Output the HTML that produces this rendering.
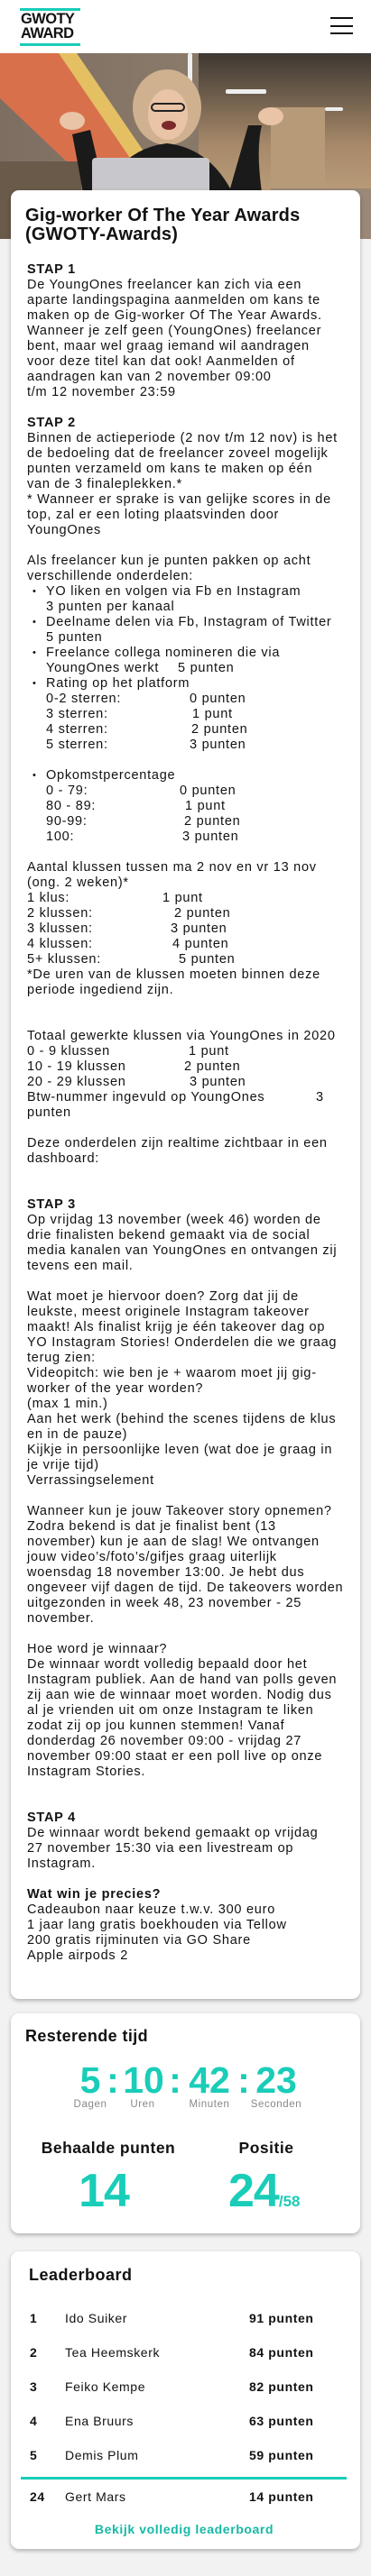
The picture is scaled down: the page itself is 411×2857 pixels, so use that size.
<!DOCTYPE html>
<html><head><meta charset="utf-8">
<style>
*{margin:0;padding:0;box-sizing:border-box}
html,body{width:411px;height:2857px;background:#f2f2f2;font-family:"Liberation Sans",Arial,sans-serif;color:#111;overflow:hidden}
.abs{position:absolute;white-space:nowrap}
.card{position:absolute;left:12px;width:387px;background:#fff;border-radius:9px;box-shadow:0 2px 5px rgba(0,0,0,.28)}
#txt{position:absolute;left:30px;top:290.5px;font-size:14.5px;letter-spacing:.75px;color:#111}
#txt div{height:17px;line-height:17px;white-space:nowrap;position:relative}
#txt b{font-weight:bold}
#txt .i{padding-left:21px}
#txt .i.bul:before{content:"•";position:absolute;left:6px;font-size:11px}
#txt span.c{position:absolute;top:0}
.teal{color:#19cdb8}
</style></head><body>
<!-- header -->
<div class="abs" style="left:0;top:0;width:411px;height:59px;background:#fff"></div>
<div class="abs" style="left:22px;top:9px;width:67px;height:3px;background:#19cdb8"></div>
<div class="abs" style="left:22px;top:48px;width:67px;height:3px;background:#19cdb8"></div>
<div class="abs" style="left:23px;top:13px;font-size:16.5px;font-weight:900;line-height:16px;letter-spacing:-.6px;color:#111">GWOTY<br>AWARD</div>
<div class="abs" style="left:366px;top:19px;width:25px;height:2px;background:#111"></div>
<div class="abs" style="left:366px;top:28px;width:25px;height:2px;background:#111"></div>
<div class="abs" style="left:366px;top:36px;width:25px;height:2px;background:#111"></div>
<!-- hero -->
<svg class="abs" style="left:0;top:59px" width="411" height="206" viewBox="0 0 411 206">
<defs><linearGradient id="bg" x1="0" x2="1" y1="0" y2="0"><stop offset="0" stop-color="#7d6e62"/><stop offset=".5" stop-color="#8a7a6a"/><stop offset="1" stop-color="#5a5048"/></linearGradient>
<linearGradient id="rt" x1="0" x2="0" y1="0" y2="1"><stop offset="0" stop-color="#3e3832"/><stop offset=".5" stop-color="#a88a6a"/><stop offset="1" stop-color="#c9ad88"/></linearGradient></defs>
<rect width="411" height="206" fill="url(#bg)"/>
<rect x="220" y="0" width="191" height="206" fill="url(#rt)"/>
<polygon points="0,0 65,0 150,120 105,150 0,50" fill="#d9704c"/>
<polygon points="65,0 85,0 160,110 150,125" fill="#e4c062"/>
<rect x="0" y="120" width="90" height="86" fill="#6a5a4a"/>
<rect x="300" y="60" width="60" height="100" fill="#b79a78"/>
<rect x="300" y="150" width="111" height="56" fill="#9a8878"/>
<rect x="250" y="40" width="45" height="5" rx="2" fill="#eee"/>
<rect x="360" y="60" width="20" height="4" rx="2" fill="#eee"/>
<rect x="208" y="0" width="5" height="40" rx="2" fill="#eee"/>
<ellipse cx="185" cy="60" rx="38" ry="42" fill="#cfb190"/>
<ellipse cx="186" cy="68" rx="22" ry="28" fill="#e9c4a6"/>
<rect x="168" y="56" width="36" height="8" rx="4" fill="none" stroke="#222" stroke-width="2"/>
<ellipse cx="187" cy="80" rx="8" ry="5" fill="#7a2a2a"/>
<path d="M80 90 Q90 140 100 206 L300 206 Q280 120 290 80 L275 80 L255 150 Q230 105 185 100 Q140 105 115 150 L100 85 Z" fill="#1a1a1a"/>
<ellipse cx="80" cy="75" rx="14" ry="10" fill="#e9c4a6"/>
<ellipse cx="300" cy="70" rx="14" ry="10" fill="#e9c4a6"/>
<rect x="102" y="116" width="130" height="90" rx="4" fill="#c8c8cc"/>
</svg>
<!-- main card -->
<div class="card" style="top:211px;height:2006px"></div>
<div class="abs" style="left:28px;top:229px;font-size:20px;font-weight:bold;line-height:21px;letter-spacing:.2px">Gig-worker Of The Year Awards<br>(GWOTY-Awards)</div>
<div id="txt">
<div><b>STAP 1</b></div>
<div>De YoungOnes freelancer kan zich via een</div>
<div>aparte landingspagina aanmelden om kans te</div>
<div>maken op de Gig-worker Of The Year Awards.</div>
<div>Wanneer je zelf geen (YoungOnes) freelancer</div>
<div>bent, maar wel graag iemand wil aandragen</div>
<div>voor deze titel kan dat ook! Aanmelden of</div>
<div>aandragen kan van 2 november 09:00</div>
<div>t/m 12 november 23:59</div>
<div></div>
<div><b>STAP 2</b></div>
<div>Binnen de actieperiode (2 nov t/m 12 nov) is het</div>
<div>de bedoeling dat de freelancer zoveel mogelijk</div>
<div>punten verzameld om kans te maken op één</div>
<div>van de 3 finaleplekken.*</div>
<div>* Wanneer er sprake is van gelijke scores in de</div>
<div>top, zal er een loting plaatsvinden door</div>
<div>YoungOnes</div>
<div></div>
<div>Als freelancer kun je punten pakken op acht</div>
<div>verschillende onderdelen:</div>
<div class="i bul">YO liken en volgen via Fb en Instagram</div>
<div class="i">3 punten per kanaal</div>
<div class="i bul">Deelname delen via Fb, Instagram of Twitter</div>
<div class="i">5 punten</div>
<div class="i bul">Freelance collega nomineren die via</div>
<div class="i">YoungOnes werkt<span class="c" style="left:167px">5 punten</span></div>
<div class="i bul">Rating op het platform</div>
<div class="i">0-2 sterren:<span class="c" style="left:180px">0 punten</span></div>
<div class="i">3 sterren:<span class="c" style="left:183px">1 punt</span></div>
<div class="i">4 sterren:<span class="c" style="left:182px">2 punten</span></div>
<div class="i">5 sterren:<span class="c" style="left:180px">3 punten</span></div>
<div></div>
<div class="i bul">Opkomstpercentage</div>
<div class="i">0 - 79:<span class="c" style="left:169px">0 punten</span></div>
<div class="i">80 - 89:<span class="c" style="left:175px">1 punt</span></div>
<div class="i">90-99:<span class="c" style="left:174px">2 punten</span></div>
<div class="i">100:<span class="c" style="left:172px">3 punten</span></div>
<div></div>
<div>Aantal klussen tussen ma 2 nov en vr 13 nov</div>
<div>(ong. 2 weken)*</div>
<div>1 klus:<span class="c" style="left:150px">1 punt</span></div>
<div>2 klussen:<span class="c" style="left:163px">2 punten</span></div>
<div>3 klussen:<span class="c" style="left:159px">3 punten</span></div>
<div>4 klussen:<span class="c" style="left:161px">4 punten</span></div>
<div>5+ klussen:<span class="c" style="left:168px">5 punten</span></div>
<div>*De uren van de klussen moeten binnen deze</div>
<div>periode ingediend zijn.</div>
<div></div>
<div></div>
<div>Totaal gewerkte klussen via YoungOnes in 2020</div>
<div>0 - 9 klussen<span class="c" style="left:179px">1 punt</span></div>
<div>10 - 19 klussen<span class="c" style="left:174px">2 punten</span></div>
<div>20 - 29 klussen<span class="c" style="left:180px">3 punten</span></div>
<div>Btw-nummer ingevuld op YoungOnes<span class="c" style="left:320px">3</span></div>
<div>punten</div>
<div></div>
<div>Deze onderdelen zijn realtime zichtbaar in een</div>
<div>dashboard:</div>
<div></div>
<div></div>
<div><b>STAP 3</b></div>
<div>Op vrijdag 13 november (week 46) worden de</div>
<div>drie finalisten bekend gemaakt via de social</div>
<div>media kanalen van YoungOnes en ontvangen zij</div>
<div>tevens een mail.</div>
<div></div>
<div>Wat moet je hiervoor doen? Zorg dat jij de</div>
<div>leukste, meest originele Instagram takeover</div>
<div>maakt! Als finalist krijg je één takeover dag op</div>
<div>YO Instagram Stories! Onderdelen die we graag</div>
<div>terug zien:</div>
<div>Videopitch: wie ben je + waarom moet jij gig-</div>
<div>worker of the year worden?</div>
<div>(max 1 min.)</div>
<div>Aan het werk (behind the scenes tijdens de klus</div>
<div>en in de pauze)</div>
<div>Kijkje in persoonlijke leven (wat doe je graag in</div>
<div>je vrije tijd)</div>
<div>Verrassingselement</div>
<div></div>
<div>Wanneer kun je jouw Takeover story opnemen?</div>
<div>Zodra bekend is dat je finalist bent (13</div>
<div>november) kun je aan de slag! We ontvangen</div>
<div>jouw video’s/foto’s/gifjes graag uiterlijk</div>
<div>woensdag 18 november 13:00. Je hebt dus</div>
<div>ongeveer vijf dagen de tijd. De takeovers worden</div>
<div>uitgezonden in week 48, 23 november - 25</div>
<div>november.</div>
<div></div>
<div>Hoe word je winnaar?</div>
<div>De winnaar wordt volledig bepaald door het</div>
<div>Instagram publiek. Aan de hand van polls geven</div>
<div>zij aan wie de winnaar moet worden. Nodig dus</div>
<div>al je vrienden uit om onze Instagram te liken</div>
<div>zodat zij op jou kunnen stemmen! Vanaf</div>
<div>donderdag 26 november 09:00 - vrijdag 27</div>
<div>november 09:00 staat er een poll live op onze</div>
<div>Instagram Stories.</div>
<div></div>
<div></div>
<div><b>STAP 4</b></div>
<div>De winnaar wordt bekend gemaakt op vrijdag</div>
<div>27 november 15:30 via een livestream op</div>
<div>Instagram.</div>
<div></div>
<div><b>Wat win je precies?</b></div>
<div>Cadeaubon naar keuze t.w.v. 300 euro</div>
<div>1 jaar lang gratis boekhouden via Tellow</div>
<div>200 gratis rijminuten via GO Share</div>
<div>Apple airpods 2</div>
</div>
<!-- countdown card -->
<div class="card" style="top:2233px;height:244px"></div>
<div class="abs" style="left:28px;top:2246px;font-size:18px;font-weight:bold;line-height:24px;letter-spacing:.4px">Resterende tijd</div>
<div class="abs teal" style="left:0;width:411px;top:2283px;line-height:48px;font-size:41px;font-weight:bold">
<span class="abs" style="left:100px;transform:translateX(-50%)">5</span>
<span class="abs" style="left:125px;transform:translateX(-50%)">:</span>
<span class="abs" style="left:159px;transform:translateX(-50%)">10</span>
<span class="abs" style="left:194px;transform:translateX(-50%)">:</span>
<span class="abs" style="left:232px;transform:translateX(-50%)">42</span>
<span class="abs" style="left:270px;transform:translateX(-50%)">:</span>
<span class="abs" style="left:306px;transform:translateX(-50%)">23</span>
</div>
<div class="abs" style="left:0;width:411px;top:2326px;line-height:16px;font-size:11.5px;color:#888;letter-spacing:.6px">
<span class="abs" style="left:100px;transform:translateX(-50%)">Dagen</span>
<span class="abs" style="left:158px;transform:translateX(-50%)">Uren</span>
<span class="abs" style="left:232px;transform:translateX(-50%)">Minuten</span>
<span class="abs" style="left:306px;transform:translateX(-50%)">Seconden</span>
</div>
<div class="abs" style="left:120px;top:2370px;transform:translateX(-50%);font-size:17.5px;font-weight:bold;line-height:24px;letter-spacing:.5px">Behaalde punten</div>
<div class="abs" style="left:295px;top:2370px;transform:translateX(-50%);font-size:17.5px;font-weight:bold;line-height:24px;letter-spacing:.5px">Positie</div>
<div class="abs teal" style="left:115px;top:2400px;transform:translateX(-50%);font-size:52px;font-weight:bold;line-height:60px;letter-spacing:-1px">14</div>
<div class="abs teal" style="left:253px;top:2400px;font-size:52px;font-weight:bold;line-height:60px;letter-spacing:-1px">24<span style="font-size:17px;letter-spacing:0">/58</span></div>
<!-- leaderboard -->
<div class="card" style="top:2497px;height:330px"></div>
<div class="abs" style="left:32px;top:2511px;font-size:18px;font-weight:bold;line-height:24px;letter-spacing:.5px">Leaderboard</div>
<div class="abs" style="left:0;top:0;width:411px;font-size:14px;letter-spacing:.6px;line-height:18px">
<div class="abs" style="left:33px;top:2562px;font-weight:bold">1</div><div class="abs" style="left:72px;top:2562px">Ido Suiker</div><div class="abs" style="left:276px;top:2562px;font-weight:bold">91 punten</div>
<div class="abs" style="left:33px;top:2600px;font-weight:bold">2</div><div class="abs" style="left:72px;top:2600px">Tea Heemskerk</div><div class="abs" style="left:276px;top:2600px;font-weight:bold">84 punten</div>
<div class="abs" style="left:33px;top:2638px;font-weight:bold">3</div><div class="abs" style="left:72px;top:2638px">Feiko Kempe</div><div class="abs" style="left:276px;top:2638px;font-weight:bold">82 punten</div>
<div class="abs" style="left:33px;top:2676px;font-weight:bold">4</div><div class="abs" style="left:72px;top:2676px">Ena Bruurs</div><div class="abs" style="left:276px;top:2676px;font-weight:bold">63 punten</div>
<div class="abs" style="left:33px;top:2714px;font-weight:bold">5</div><div class="abs" style="left:72px;top:2714px">Demis Plum</div><div class="abs" style="left:276px;top:2714px;font-weight:bold">59 punten</div>
<div class="abs" style="left:23px;top:2747px;width:361px;height:3px;background:#19cdb8"></div>
<div class="abs" style="left:33px;top:2760px;font-weight:bold">24</div><div class="abs" style="left:72px;top:2760px">Gert Mars</div><div class="abs" style="left:276px;top:2760px;font-weight:bold">14 punten</div>
<div class="abs teal" style="left:204px;top:2796px;transform:translateX(-50%);font-weight:bold;color:#17b9a6">Bekijk volledig leaderboard</div>
</div>
</body></html>
